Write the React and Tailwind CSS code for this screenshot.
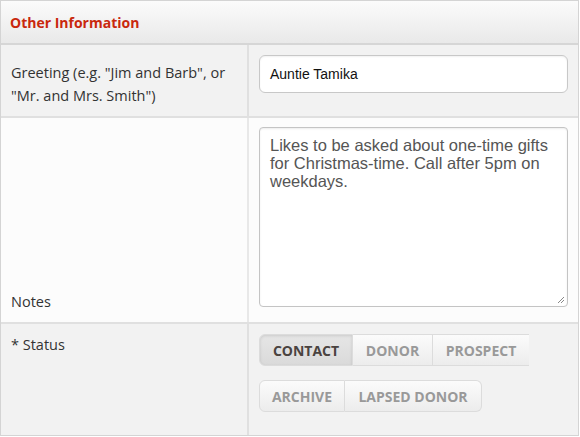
export default function App() {
  const font = { fontFamily: '"Open Sans", sans-serif' };
  const btn =
    'h-[32px] px-[13px] text-[14px] font-bold uppercase border border-[#dcdcdc] bg-gradient-to-b from-[#fbfbfb] to-[#ececec] text-[#999] flex items-center';

  return (
    <div className="w-[580px] h-[437px] bg-white" style={font}>
      <div className="w-[579px] h-[436px] border border-[#d4d4d4] flex flex-col overflow-hidden">
        {/* header */}
        <div className="h-[44px] shrink-0 border-b-2 border-[#d6d6d6] bg-gradient-to-b from-[#fbfbfb] to-[#e9e9e9] flex items-center px-[9px]">
          <span className="text-[14px] font-bold text-[#c9280d]">Other Information</span>
        </div>

        {/* greeting */}
        <div className="flex h-[73px] shrink-0 border-b-2 border-[#e0e0e0] bg-[#f2f2f2]">
          <div className="w-[248px] shrink-0 border-r-2 border-[#e0e0e0] px-[10px] pt-[16px] text-[14.5px] leading-[23px] text-[#333]">
            Greeting (e.g. "Jim and Barb", or "Mr. and Mrs. Smith")
          </div>
          <div className="flex-1 pl-[10px] pr-[10px] pt-[10px]">
            <div
              className="h-[38px] rounded-[6px] border border-[#c8c8c8] bg-white px-[10px] flex items-center text-[14px] text-[#111] shadow-[inset_0_1px_2px_rgba(0,0,0,0.06)]"
              style={{ fontFamily: '"Liberation Sans", Arial, sans-serif' }}
            >
              Auntie Tamika
            </div>
          </div>
        </div>

        {/* notes */}
        <div className="flex h-[206px] shrink-0 border-b-2 border-[#e0e0e0] bg-[#fcfcfc]">
          <div className="w-[248px] shrink-0 border-r-2 border-[#e8e8e8] px-[10px] pb-[9px] flex items-end text-[14.5px] text-[#333]">
            Notes
          </div>
          <div className="flex-1 pl-[10px] pr-[10px] pt-[9px]">
            <div
              className="relative h-[180px] rounded-[4px] border border-[#c4c4c4] bg-white px-[10px] pt-[8px] text-[16.5px] leading-[18px] text-[#555] shadow-[inset_0_1px_2px_rgba(0,0,0,0.08)]"
              style={{ fontFamily: '"Liberation Sans", Arial, sans-serif' }}
            >
              Likes to be asked about one-time gifts for Christmas-time. Call after 5pm on weekdays.
              <svg className="absolute right-[2px] bottom-[2px]" width="9" height="9" viewBox="0 0 9 9">
                <path d="M8 2 L2 8 M8 5 L5 8" stroke="#888" strokeWidth="1" />
              </svg>
            </div>
          </div>
        </div>

        {/* status */}
        <div className="flex flex-1 bg-[#f2f2f2]">
          <div className="w-[248px] shrink-0 border-r-2 border-[#e0e0e0] px-[10px] pt-[10px] text-[14.5px] text-[#333]">
            * Status
          </div>
          <div className="flex-1 pl-[10px] pt-[10px] flex flex-col gap-[14px]">
            <div className="flex">
              <div className={`${btn} rounded-l-[6px] w-[94px] justify-center !text-[#4a4340] !from-[#e6e6e6] !to-[#dadada] shadow-[inset_0_1px_3px_rgba(0,0,0,0.12)]`}>
                Contact
              </div>
              <div className={`${btn} border-l-0 w-[80px] justify-center`}>Donor</div>
              <div className={`${btn} border-l-0 border-r-0 w-[96px] justify-center`}>Prospect</div>
            </div>
            <div className="flex">
              <div className={`${btn} rounded-l-[6px] w-[86px] justify-center`}>Archive</div>
              <div className={`${btn} border-l-0 rounded-r-[6px] w-[137px] justify-center`}>Lapsed Donor</div>
            </div>
          </div>
        </div>
      </div>
    </div>
  );
}
